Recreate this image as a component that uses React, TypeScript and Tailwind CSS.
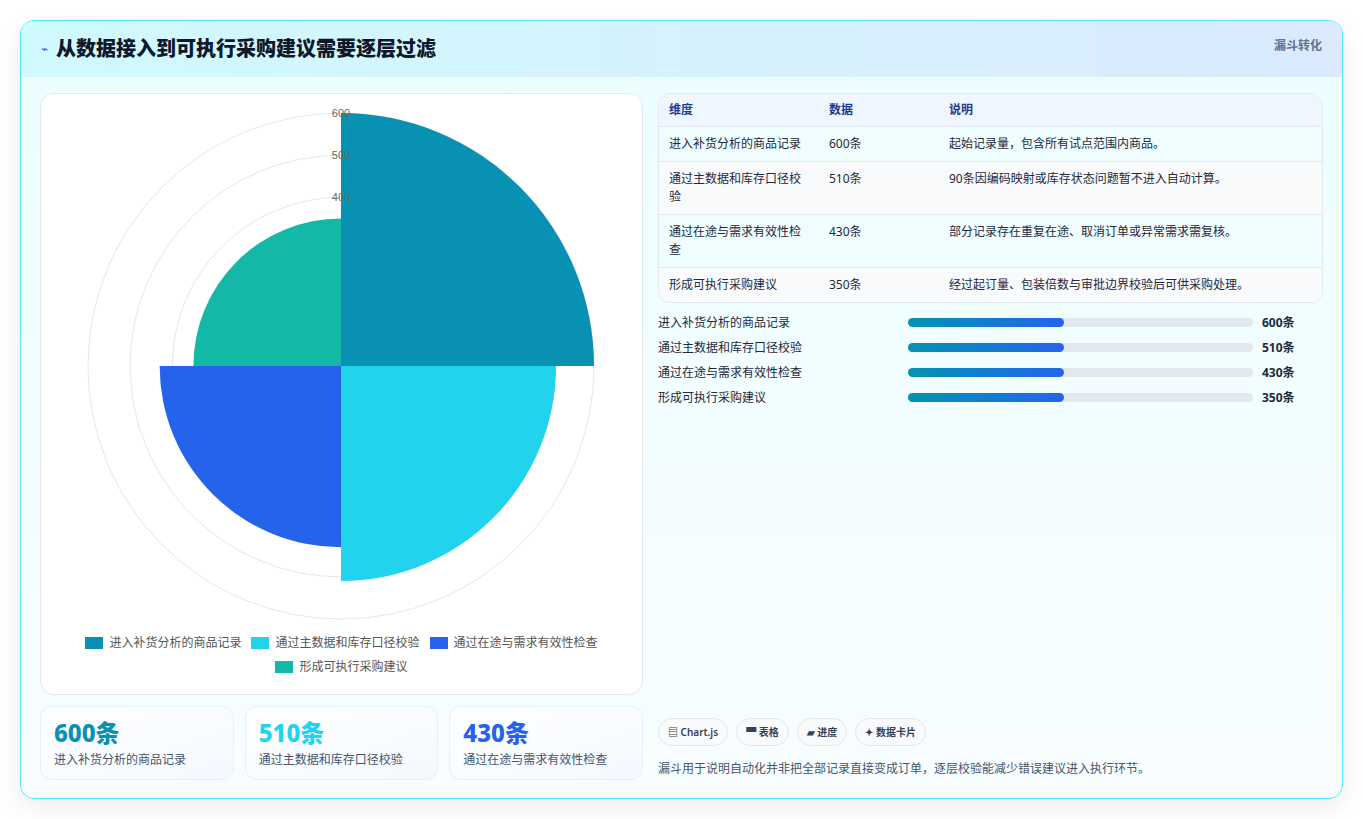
import React from "react";

const rows = [
  ["进入补货分析的商品记录", "600条", "起始记录量，包含所有试点范围内商品。"],
  ["通过主数据和库存口径校验", "510条", "90条因编码映射或库存状态问题暂不进入自动计算。"],
  ["通过在途与需求有效性检查", "430条", "部分记录存在重复在途、取消订单或异常需求需复核。"],
  ["形成可执行采购建议", "350条", "经过起订量、包装倍数与审批边界校验后可供采购处理。"],
];

function sector(cx: number, cy: number, r: number, a0: number, a1: number) {
  const p = (a: number) => [cx + r * Math.sin(a), cy - r * Math.cos(a)];
  const [x0, y0] = p(a0);
  const [x1, y1] = p(a1);
  return `M${cx},${cy} L${x0},${y0} A${r},${r} 0 0 1 ${x1},${y1} Z`;
}

function Chart() {
  const cx = 300, cy = 270, k = 0.4217;
  const data = [
    [600, "#0891b2"],
    [510, "#22d3ee"],
    [430, "#2563eb"],
    [350, "#14b8a6"],
  ] as const;
  return (
    <svg width="602" height="530" className="block">
      {[100, 200, 300, 400, 500, 600].map((v) => (
        <circle key={v} cx={cx} cy={cy} r={v * k} fill="none" stroke="#e5e7eb" strokeWidth="1" />
      ))}
      {data.map(([v, c], i) => (
        <path key={i} d={sector(cx, cy, v * k, (i * Math.PI) / 2, ((i + 1) * Math.PI) / 2)} fill={c} />
      ))}
      {[600, 500, 400].map((v) => (
        <text key={v} x={cx} y={cy - v * k + 4} textAnchor="middle" fontSize="11" fill="#666" fontFamily="Liberation Sans, sans-serif">{v}</text>
      ))}
    </svg>
  );
}

const legend: [string, string][] = [
  ["#0891b2", "进入补货分析的商品记录"],
  ["#22d3ee", "通过主数据和库存口径校验"],
  ["#2563eb", "通过在途与需求有效性检查"],
  ["#14b8a6", "形成可执行采购建议"],
];

export default function App() {
  return (
    <div className="w-[1363px] h-[819px] bg-white p-[20px]" style={{ fontFamily: '"Noto Sans", "Noto Sans CJK SC", sans-serif' }}>
      <div className="h-[779px] rounded-[14px] border border-cyan-300 bg-gradient-to-b from-[#ecfeff] to-[#f8fdff] shadow-[0_8px_24px_rgba(0,0,0,0.08)] overflow-hidden flex flex-col">
        <div className="h-[56px] shrink-0 flex items-center justify-between px-[20px] bg-gradient-to-r from-[#cffafe] to-[#dbeafe]">
          <div className="flex items-center gap-[8px]">
            <span className="text-[12px] text-blue-600">⌁</span>
            <span className="text-[20px] font-extrabold text-[#0f172a]">从数据接入到可执行采购建议需要逐层过滤</span>
          </div>
          <span className="text-[12px] font-semibold text-slate-500 self-start mt-[16px]">漏斗转化</span>
        </div>
        <div className="flex gap-[15px] px-[19px] pt-[16px] flex-1">
          <div className="w-[603px] flex flex-col gap-[11px]">
            <div className="h-[602px] rounded-[14px] border border-slate-200 bg-white flex flex-col items-center">
              <div className="mt-[2px]"><Chart /></div>
              <div className="flex flex-wrap justify-center gap-x-[10px] gap-y-[6px] px-[40px] mt-[8px] text-[12px] text-[#555]">
                {legend.map(([c, t]) => (
                  <div key={t} className="flex items-center gap-[6px]">
                    <span className="w-[18px] h-[12px]" style={{ background: c }} />
                    <span>{t}</span>
                  </div>
                ))}
              </div>
            </div>
            <div className="grid grid-cols-3 gap-[11px]">
              {[["600条", "text-[#0891b2]", "进入补货分析的商品记录"], ["510条", "text-[#22d3ee]", "通过主数据和库存口径校验"], ["430条", "text-[#2563eb]", "通过在途与需求有效性检查"]].map(([n, c, l]) => (
                <div key={n} className="h-[74px] rounded-[12px] border border-sky-100 bg-gradient-to-br from-white to-[#f4f9ff] px-[13px] pt-[10px]">
                  <div className={`text-[24px] font-extrabold leading-[32px] ${c}`}>{n}</div>
                  <div className="text-[12px] text-slate-600 mt-[2px]">{l}</div>
                </div>
              ))}
            </div>
          </div>
          <div className="flex-1 flex flex-col">
            <div className="rounded-[12px] border border-slate-200 overflow-hidden bg-white text-[12px] text-[#1e293b]">
              <div className="grid grid-cols-[160px_120px_1fr] bg-[#eff6ff] h-[33px] items-center px-[10px] font-semibold text-[#1e3a8a] border-b border-slate-200">
                <div>维度</div><div>数据</div><div>说明</div>
              </div>
              {rows.map((r, i) => (
                <div key={i} className={`grid grid-cols-[160px_120px_1fr] px-[10px] py-[8px] leading-[18px] ${i % 2 ? "bg-[#f8fafc]" : "bg-[#f0fdff]"} ${i < 3 ? "border-b border-slate-200" : ""}`}>
                  <div className="pr-[20px]">{r[0]}</div><div>{r[1]}</div><div>{r[2]}</div>
                </div>
              ))}
            </div>
            <div className="flex flex-col gap-[6px] mt-[10px]">
              {rows.map((r) => (
                <div key={r[0]} className="flex items-center h-[19px] text-[12px] text-[#1e293b]">
                  <div className="w-[250px]">{r[0]}</div>
                  <div className="w-[345px] h-[9px] rounded-full bg-[#e2e8f0]">
                    <div className="w-[156px] h-full rounded-full bg-gradient-to-r from-[#0891b2] to-[#2563eb]" />
                  </div>
                  <div className="ml-[9px] font-bold">{r[1]}</div>
                </div>
              ))}
            </div>
            <div className="mt-auto pb-[20px]">
              <div className="flex gap-[8px] text-[10px] font-semibold text-slate-700">
                {["▤ Chart.js", "▀ 表格", "▰ 进度", "✦ 数据卡片"].map((t) => (
                  <span key={t} className="h-[28px] px-[9px] flex items-center rounded-full border border-slate-200 bg-[#f8fafc]">{t}</span>
                ))}
              </div>
              <div className="mt-[14px] text-[12px] text-slate-600">漏斗用于说明自动化并非把全部记录直接变成订单，逐层校验能减少错误建议进入执行环节。</div>
            </div>
          </div>
        </div>
      </div>
    </div>
  );
}
